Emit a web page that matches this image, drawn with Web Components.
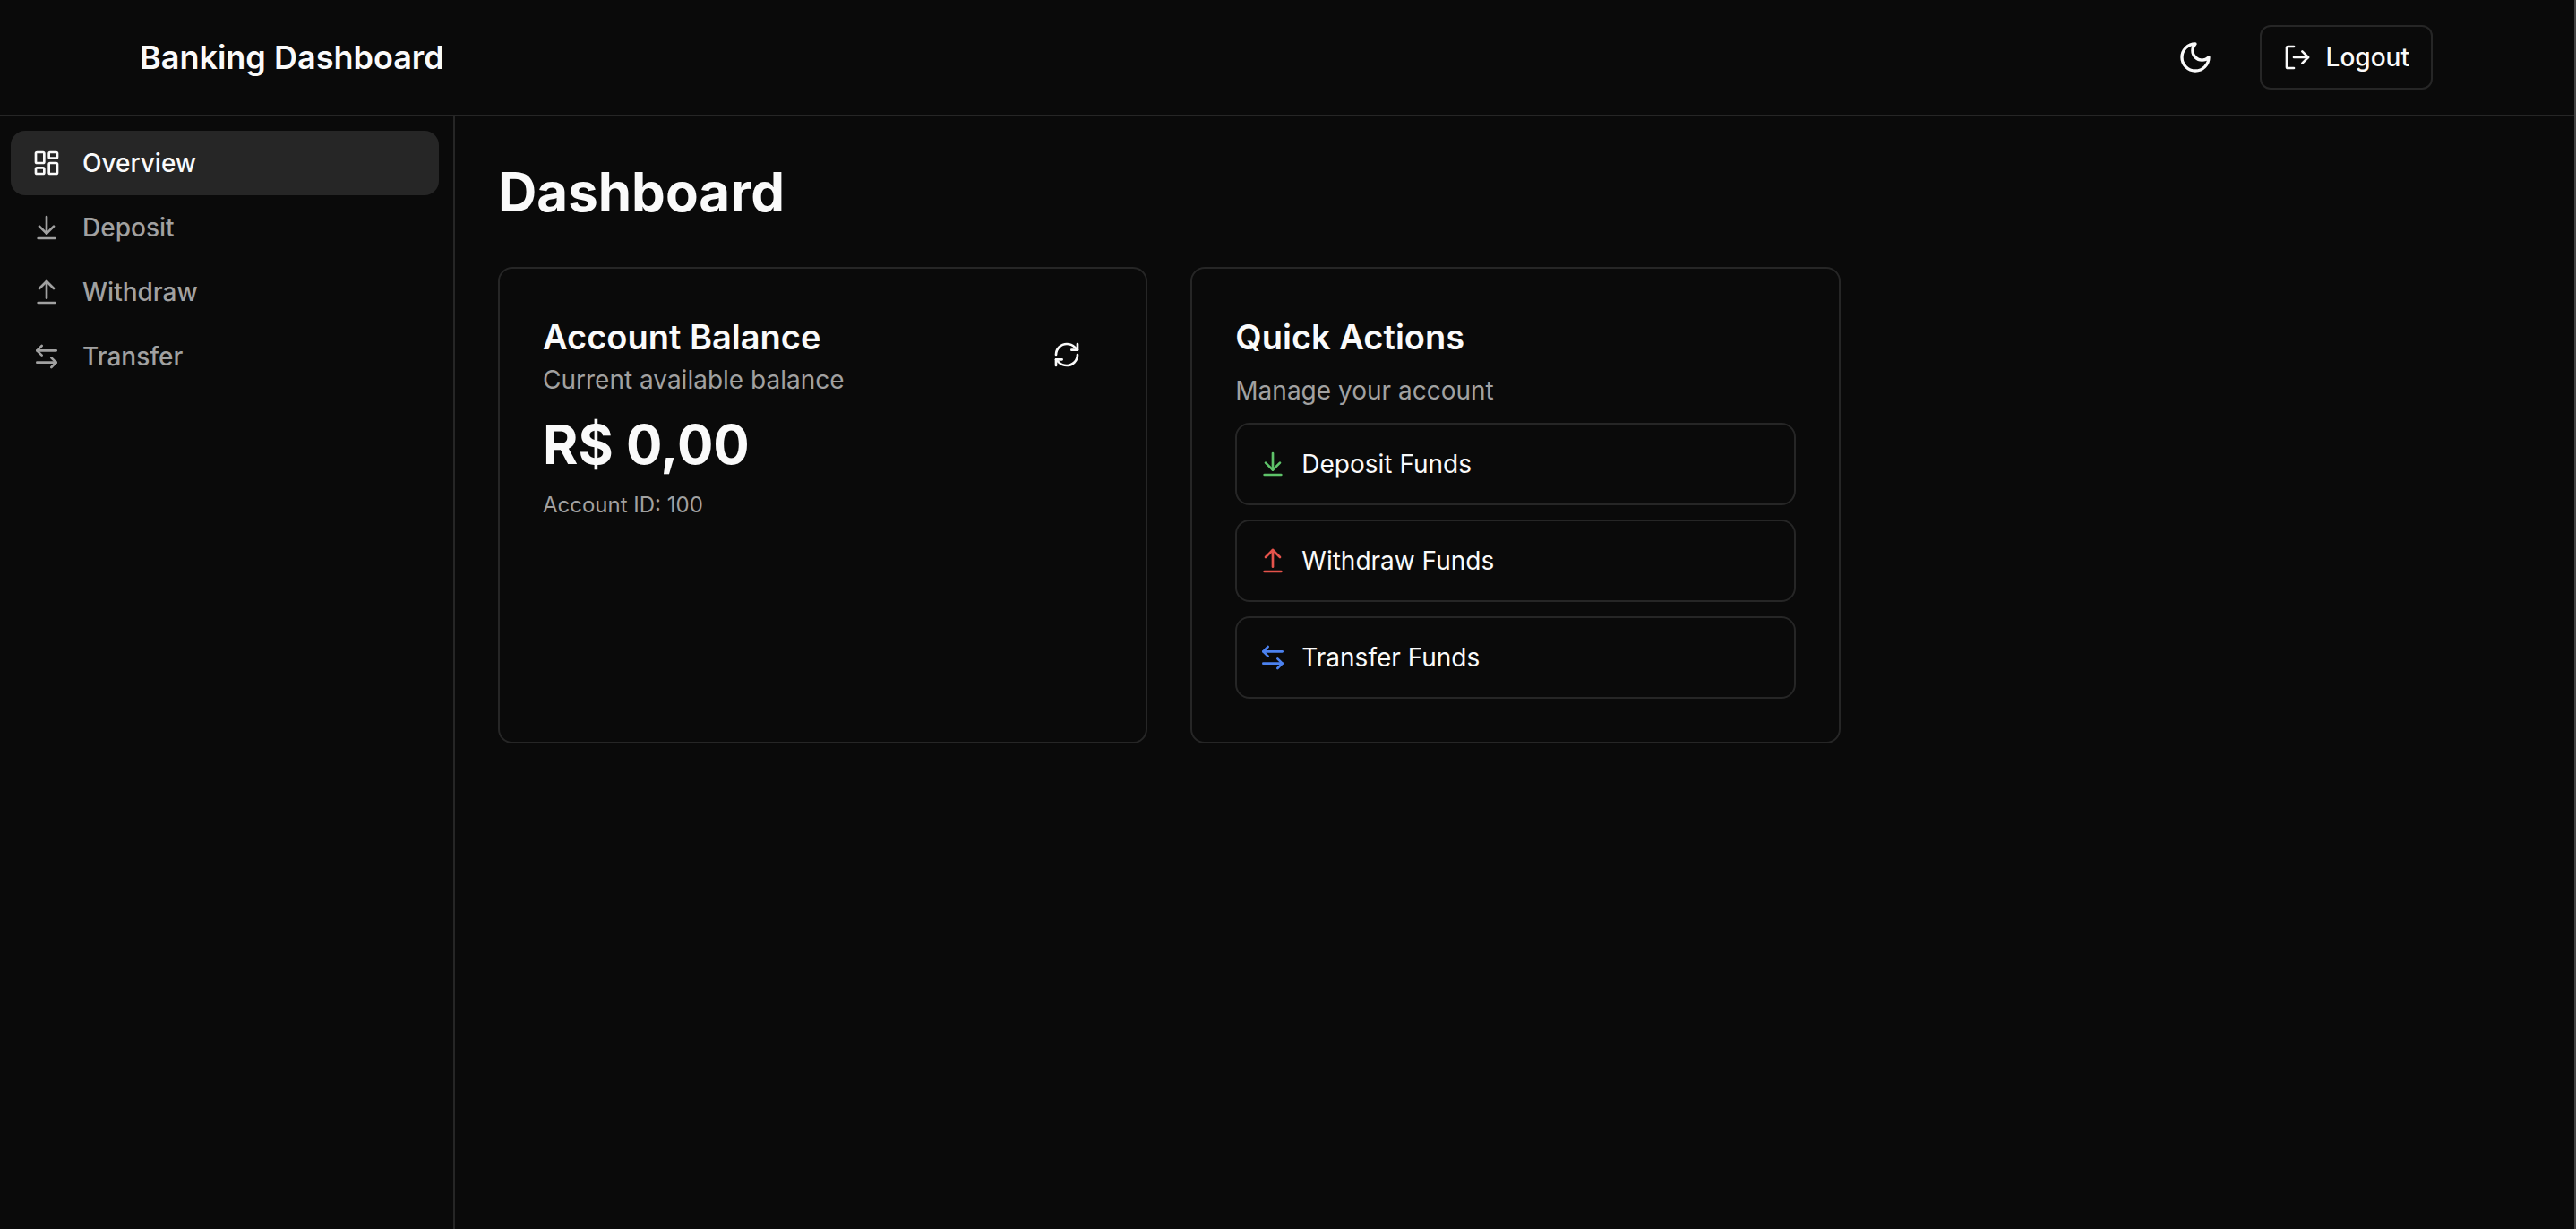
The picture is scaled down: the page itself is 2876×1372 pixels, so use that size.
<!DOCTYPE html>
<html lang="en">
<head>
<meta charset="utf-8">
<title>Banking Dashboard</title>
<style>
  :root {
    --bg: #0a0a0a;
    --fg: #fafafa;
    --muted: #a1a1a1;
    --line: #262626;
    --edge: #444;
  }
  html { background: #0a0a0a; }
  body {
    margin: 0;
    background: var(--bg);
    color: var(--fg);
    font-family: Inter, "Liberation Sans", sans-serif;
    font-size: 28px;
    line-height: 40px;
    -webkit-font-smoothing: antialiased;
  }
</style>
</head>
<body>
<bank-app>
  <bank-header slot="header" heading="Banking Dashboard"></bank-header>
  <bank-nav slot="nav">
    <nav-item icon="overview" href="#overview" active>Overview</nav-item>
    <nav-item icon="deposit" href="#deposit">Deposit</nav-item>
    <nav-item icon="withdraw" href="#withdraw">Withdraw</nav-item>
    <nav-item icon="transfer" href="#transfer">Transfer</nav-item>
  </bank-nav>
  <bank-page heading="Dashboard">
    <balance-card amount="R$ 0,00" account="100"></balance-card>
    <actions-card>
      <action-button icon="deposit" style="--tint:#5ec269">Deposit Funds</action-button>
      <action-button icon="withdraw" style="--tint:#e5534b">Withdraw Funds</action-button>
      <action-button icon="transfer" style="--tint:#4c82f0">Transfer Funds</action-button>
    </actions-card>
  </bank-page>
</bank-app>

<script>
const ICONS = {
  overview: '<rect x="3" y="3" width="7" height="9" rx="1"/><rect x="14" y="3" width="7" height="5" rx="1"/><rect x="14" y="12" width="7" height="9" rx="1"/><rect x="3" y="16" width="7" height="5" rx="1"/>',
  deposit: '<path d="M12 17V3"/><path d="m6 11 6 6 6-6"/><path d="M19 21H5"/>',
  withdraw: '<path d="m18 9-6-6-6 6"/><path d="M12 3v14"/><path d="M5 21h14"/>',
  transfer: '<path d="M8 3 4 7l4 4"/><path d="M4 7h16"/><path d="m16 21 4-4-4-4"/><path d="M20 17H4"/>',
  moon: '<path d="M12 3a6 6 0 0 0 9 9 9 9 0 1 1-9-9Z"/>',
  logout: '<path d="M9 21H4a1 1 0 0 1-1-1V4a1 1 0 0 1 1-1h5"/><path d="m16 17 5-5-5-5"/><path d="M21 12H9"/>',
  refresh: '<path d="M3 12a9 9 0 0 1 9-9 9.75 9.75 0 0 1 6.74 2.74L21 8"/><path d="M21 3v5h-5"/><path d="M21 12a9 9 0 0 1-9 9 9.75 9.75 0 0 1-6.74-2.74L3 16"/><path d="M8 16H3v5"/>'
};

const BASE = '*{box-sizing:border-box}h1,h2,p{margin:0}button{font:inherit;color:inherit;background:none;border:0;padding:0;cursor:pointer}a{color:inherit;text-decoration:none}';

class BankElement extends HTMLElement {
  connectedCallback() {
    if (this.shadowRoot) return;
    this.attachShadow({ mode: 'open' }).innerHTML = `<style>${BASE}${this.css()}</style>${this.html()}`;
  }
}

customElements.define('bank-icon', class extends BankElement {
  css() { return ':host{display:block;flex:none;width:var(--size,32px);height:var(--size,32px)}svg{display:block;width:100%;height:100%}'; }
  html() {
    return `<svg viewBox="0 0 24 24" fill="none" stroke="currentColor" stroke-width="2" stroke-linecap="round" stroke-linejoin="round" aria-hidden="true">${ICONS[this.getAttribute('name')]}</svg>`;
  }
});

customElements.define('bank-app', class extends BankElement {
  css() {
    return `:host{display:flex;flex-direction:column;min-height:100vh;position:relative}
    .body{display:flex;flex:1}
    .main{flex:1;min-width:0}
    /* hairline window edge, drawn over the content */
    :host::after{content:"";position:absolute;top:0;right:0;bottom:0;width:2px;background:var(--edge)}`;
  }
  html() { return '<slot name="header"></slot><div class="body"><slot name="nav"></slot><div class="main"><slot></slot></div></div>'; }
});

customElements.define('bank-header', class extends BankElement {
  css() {
    return `:host{display:block;padding-right:4px;border-bottom:2px solid var(--line)}
    header{display:flex;align-items:center;justify-content:space-between;max-width:2560px;height:128px;margin:0 auto}
    .title{font-size:36px;line-height:56px;font-weight:600}
    .tools{display:flex;align-items:center;gap:32px}
    .theme{display:grid;place-items:center;width:80px;height:80px;--size:40px}
    .logout{display:flex;align-items:center;gap:16px;height:72px;padding:0 24px;border:2px solid var(--line);border-radius:12px;font-weight:500}`;
  }
  html() {
    return `<header><div class="title">${this.getAttribute('heading')}</div><div class="tools">
      <button class="theme" type="button" aria-label="Toggle theme"><bank-icon name="moon"></bank-icon></button>
      <button class="logout" type="button"><bank-icon name="logout"></bank-icon>Logout</button></div></header>`;
  }
});

customElements.define('bank-nav', class extends BankElement {
  css() {
    return `:host{display:block;flex:none;width:508px;box-sizing:border-box;border-right:2px solid var(--line)}
    nav{display:flex;flex-direction:column;padding:16px 16px 16px 12px}`;
  }
  html() { return '<nav><slot></slot></nav>'; }
});

customElements.define('nav-item', class extends BankElement {
  css() {
    return `:host{display:block;color:var(--muted);font-weight:500}
    :host([active]){color:var(--fg)}
    a{display:flex;align-items:center;gap:24px;padding:16px 24px;border-radius:16px}
    :host([active]) a{background:#262626}`;
  }
  html() {
    return `<a href="${this.getAttribute('href')}"${this.hasAttribute('active') ? ' aria-current="page"' : ''}><bank-icon name="${this.getAttribute('icon')}"></bank-icon><slot></slot></a>`;
  }
});

customElements.define('bank-page', class extends BankElement {
  css() {
    return `:host{display:block}
    main{display:flex;flex-direction:column;gap:48px;padding:48px}
    h1{font-size:60px;line-height:72px;font-weight:700}
    .grid{display:grid;grid-template-columns:repeat(3,minmax(0,1fr));gap:48px}`;
  }
  html() { return `<main><h1>${this.getAttribute('heading')}</h1><div class="grid"><slot></slot></div></main>`; }
});

const CARD = `:host{display:block;box-sizing:border-box;padding:48px;border:2px solid var(--line);border-radius:16px}
  h2{font-size:38px;line-height:56px;font-weight:600}
  .sub{color:var(--muted)}`;

customElements.define('balance-card', class extends BankElement {
  css() {
    return `${CARD}
    .head{display:flex;align-items:center;justify-content:space-between}
    .refresh{display:grid;place-items:center;width:80px;height:80px}
    .amount{margin-top:16px;font-size:60px;line-height:72px;font-weight:700}
    .id{margin-top:16px;font-size:24px;line-height:32px;color:var(--muted)}`;
  }
  html() {
    return `<div class="head"><div><h2>Account Balance</h2><p class="sub">Current available balance</p></div>
      <button class="refresh" type="button" aria-label="Refresh balance"><bank-icon name="refresh"></bank-icon></button></div>
      <p class="amount">${this.getAttribute('amount')}</p><p class="id">Account ID: ${this.getAttribute('account')}</p>`;
  }
});

customElements.define('actions-card', class extends BankElement {
  css() { return `${CARD}.sub{margin-top:12px}.list{display:flex;flex-direction:column;gap:16px;margin-top:16px}`; }
  html() { return '<h2>Quick Actions</h2><p class="sub">Manage your account</p><div class="list"><slot></slot></div>'; }
});

customElements.define('action-button', class extends BankElement {
  css() {
    return `:host{display:block;font-weight:400}
    button{display:flex;align-items:center;gap:16px;width:100%;padding:24px;border:2px solid var(--line);border-radius:16px}
    bank-icon{color:var(--tint)}`;
  }
  html() { return `<button type="button"><bank-icon name="${this.getAttribute('icon')}"></bank-icon><slot></slot></button>`; }
});
</script>
</body>
</html>
